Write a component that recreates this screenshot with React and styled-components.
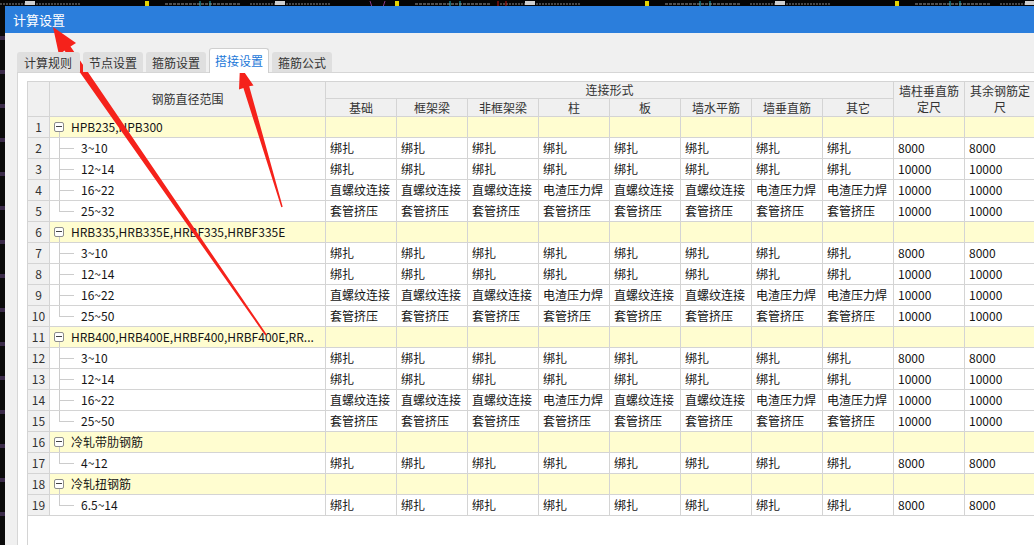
import React from 'react';
import styled, { createGlobalStyle } from 'styled-components';

const GlobalStyle = createGlobalStyle`
  html, body {
    margin: 0;
    padding: 0;
    background: #050505;
    overflow: hidden;
  }
  * {
    box-sizing: border-box;
  }
`;

const tabs = ['计算规则', '节点设置', '箍筋设置', '搭接设置', '箍筋公式'];
const subHeads = ['基础', '框架梁', '非框架梁', '柱', '板', '墙水平筋', '墙垂直筋', '其它'];

const bind = ['绑扎', '绑扎', '绑扎', '绑扎', '绑扎', '绑扎', '绑扎', '绑扎'];
const screw = ['直螺纹连接', '直螺纹连接', '直螺纹连接', '电渣压力焊', '直螺纹连接', '直螺纹连接', '电渣压力焊', '电渣压力焊'];
const sleeve = ['套管挤压', '套管挤压', '套管挤压', '套管挤压', '套管挤压', '套管挤压', '套管挤压', '套管挤压'];

const groups = [
  {
    name: 'HPB235,HPB300',
    items: [
      { range: '3~10', cells: bind, len: ['8000', '8000'] },
      { range: '12~14', cells: bind, len: ['10000', '10000'] },
      { range: '16~22', cells: screw, len: ['10000', '10000'] },
      { range: '25~32', cells: sleeve, len: ['10000', '10000'] },
    ],
  },
  {
    name: 'HRB335,HRB335E,HRBF335,HRBF335E',
    items: [
      { range: '3~10', cells: bind, len: ['8000', '8000'] },
      { range: '12~14', cells: bind, len: ['10000', '10000'] },
      { range: '16~22', cells: screw, len: ['10000', '10000'] },
      { range: '25~50', cells: sleeve, len: ['10000', '10000'] },
    ],
  },
  {
    name: 'HRB400,HRB400E,HRBF400,HRBF400E,RR...',
    items: [
      { range: '3~10', cells: bind, len: ['8000', '8000'] },
      { range: '12~14', cells: bind, len: ['10000', '10000'] },
      { range: '16~22', cells: screw, len: ['10000', '10000'] },
      { range: '25~50', cells: sleeve, len: ['10000', '10000'] },
    ],
  },
  {
    name: '冷轧带肋钢筋',
    items: [{ range: '4~12', cells: bind, len: ['8000', '8000'] }],
  },
  {
    name: '冷轧扭钢筋',
    items: [{ range: '6.5~14', cells: bind, len: ['8000', '8000'] }],
  },
];

function CadStrip() {
  const marks = [0, 250, 500, 750, 1000];
  return (
    <StCadTop>
      <svg width="1034" height="6" viewBox="0 0 1034 6">
        {marks.map((x) => (
          <g key={x}>
            <line x1={x} y1="3" x2={x + 80} y2="3" stroke="#8a8a8a" strokeWidth="1" strokeDasharray="2 1" />
            <rect x={x + 25} y="0" width="10" height="4" fill="#cfcfcf" />
            <rect x={x + 145} y="0" width="4" height="6" fill="#e5d400" />
            <line x1={x + 200} y1="0" x2={x + 200} y2="6" stroke="#1fb8c8" />
            <line x1={x + 210} y1="0" x2={x + 210} y2="6" stroke="#1fb8c8" />
            <line x1={x + 165} y1="3" x2={x + 240} y2="3" stroke="#9a9a9a" strokeDasharray="3 1" />
          </g>
        ))}
        <line x1="370" y1="0" x2="372" y2="6" stroke="#8a3a8a" />
        <line x1="385" y1="0" x2="383" y2="6" stroke="#8a3a8a" />
        <line x1="498" y1="0" x2="498" y2="6" stroke="#c01818" />
        <line x1="506" y1="0" x2="506" y2="6" stroke="#c01818" />
      </svg>
    </StCadTop>
  );
}

function Arrows() {
  return (
    <StOverlay width="1034" height="545" viewBox="0 0 1034 545">
      <polygon
        fill="#f5221b"
        points="53,27 76,43 70.5,46.5 266.7,334.5 265.3,335.5 64.5,50.5 59,55"
      />
      <polygon
        fill="#f5221b"
        points="240,66 253.5,85.5 249.2,86.2 282.7,206.8 281.3,207.2 243.4,88 239,89.5"
      />
    </StOverlay>
  );
}

function App() {
  let rowNo = 0;
  return (
    <>
      <GlobalStyle />
      <StScreen>
        <CadStrip />
        <StMain>
          <StCadLeft />
          <StWindow>
            <StTitleBar>计算设置</StTitleBar>
            <StContent>
              <StTabBar>
                {tabs.map((t, i) => (
                  <StTab key={t} active={i === 3} first={i === 0}>
                    {t}
                  </StTab>
                ))}
              </StTabBar>
              <StPanel>
                <StGrid>
                  <StTable>
                    <colgroup>
                      <col style={{ width: 22 }} />
                      <col style={{ width: 276 }} />
                      {Array.from({ length: 10 }).map((_, i) => (
                        <col key={i} style={{ width: 71 }} />
                      ))}
                    </colgroup>
                    <thead>
                      <StHeadRow1>
                        <StTh rowSpan={2} />
                        <StTh rowSpan={2}>钢筋直径范围</StTh>
                        <StTh colSpan={8}>连接形式</StTh>
                        <StTh rowSpan={2}>
                          墙柱垂直筋
                          <br />
                          定尺
                        </StTh>
                        <StTh rowSpan={2}>
                          其余钢筋定
                          <br />
                          尺
                        </StTh>
                      </StHeadRow1>
                      <StHeadRow2>
                        {subHeads.map((h) => (
                          <StTh key={h}>{h}</StTh>
                        ))}
                      </StHeadRow2>
                    </thead>
                    <tbody>
                      {groups.map((g) => {
                        rowNo += 1;
                        const groupRow = (
                          <StRow key={`g${rowNo}`}>
                            <StNum>{rowNo}</StNum>
                            <StTreeCell group>
                              <StToggle />
                              {g.name}
                            </StTreeCell>
                            {Array.from({ length: 10 }).map((_, i) => (
                              <StCell key={i} group />
                            ))}
                          </StRow>
                        );
                        const childRows = g.items.map((it, idx) => {
                          rowNo += 1;
                          return (
                            <StRow key={`c${rowNo}`}>
                              <StNum>{rowNo}</StNum>
                              <StTreeCell last={idx === g.items.length - 1}>{it.range}</StTreeCell>
                              {it.cells.map((c, i) => (
                                <StCell key={i}>{c}</StCell>
                              ))}
                              {it.len.map((c, i) => (
                                <StCell key={`l${i}`}>{c}</StCell>
                              ))}
                            </StRow>
                          );
                        });
                        return [groupRow, ...childRows];
                      })}
                    </tbody>
                  </StTable>
                </StGrid>
              </StPanel>
            </StContent>
          </StWindow>
        </StMain>
        <Arrows />
      </StScreen>
    </>
  );
}

export default App;

const StScreen = styled.div`
  position: relative;
  width: 1034px;
  height: 545px;
  display: flex;
  flex-direction: column;
  overflow: hidden;
  background: #050505;
  font-family: 'Noto Sans CJK SC', 'Noto Sans', sans-serif;
`;
const StCadTop = styled.div`
  height: 6px;
  flex: none;
  line-height: 0;
  background: #050505;
`;
const StMain = styled.div`
  flex: 1;
  display: flex;
  min-height: 0;
`;
const StCadLeft = styled.div`
  width: 5px;
  flex: none;
  background: repeating-linear-gradient(180deg, #0a0a0a 0px, #0a0a0a 30px, #3a2a48 30px, #3a2a48 34px);
`;
const StWindow = styled.div`
  flex: 1;
  display: flex;
  flex-direction: column;
  background: #f0f0f0;
  min-width: 0;
`;
const StTitleBar = styled.div`
  height: 27px;
  flex: none;
  display: flex;
  align-items: center;
  padding-left: 8px;
  background: #2b7edc;
  color: #ffffff;
  font-size: 13px;
`;
const StContent = styled.div`
  flex: 1;
  display: flex;
  flex-direction: column;
  padding: 15px 0 0 12px;
  min-height: 0;
`;
const StTabBar = styled.div`
  height: 24px;
  flex: none;
  display: flex;
  align-items: flex-end;
  gap: 3px;
  position: relative;
  z-index: 1;
`;
const StTab = styled.div`
  height: 20px;
  display: flex;
  align-items: center;
  padding: 0 ${({ first }) => (first ? '8px 0 7px' : '6px')};
  background: #dfdfdf;
  border-radius: 3px 3px 0 0;
  color: #333333;
  font-size: 12px;
  ${({ active }) =>
    active &&
    `
    height: 25px;
    margin-bottom: -1px;
    padding: 0 5px 1px;
    background: #ffffff;
    border: 1px solid #cfcfcf;
    border-bottom: none;
    color: #1c78d8;
  `}
`;
const StPanel = styled.div`
  flex: 1;
  display: flex;
  min-height: 0;
  padding: 8px 0 0 9px;
  background: #ffffff;
  border-top: 1px solid #d6d6d6;
  border-left: 1px solid #d6d6d6;
`;
const StGrid = styled.div`
  flex: 1;
  min-width: 0;
  border-left: 1px solid #d4d4d4;
  background: #ffffff;
`;
const StTable = styled.table`
  border-collapse: collapse;
  table-layout: fixed;
  width: 1008px;
  margin-left: -1px;
  font-size: 12px;
  color: #141414;
`;
const StHeadRow1 = styled.tr`
  height: 17px;
`;
const StHeadRow2 = styled.tr`
  height: 18px;
`;
const StTh = styled.th`
  padding: 0;
  border: 1px solid #d4d4d4;
  background: #f0f0f0;
  font-weight: normal;
  color: #333333;
  line-height: 16px;
  white-space: nowrap;
  overflow: hidden;
`;
const StRow = styled.tr`
  height: 21px;
`;
const StNum = styled.td`
  padding: 0;
  border: 1px solid #d4d4d4;
  background: #f0f0f0;
  text-align: center;
  color: #333333;
  line-height: 18px;
`;
const StTreeCell = styled.td`
  position: relative;
  padding: 0 0 0 ${({ group }) => (group ? '21px' : '31px')};
  border: 1px solid #d4d4d4;
  background: ${({ group }) => (group ? '#fffdd0' : '#ffffff')};
  line-height: 18px;
  white-space: nowrap;
  overflow: hidden;
  ${({ group, last }) =>
    group
      ? `
    &::after {
      content: '';
      position: absolute;
      left: 9px;
      top: 15px;
      bottom: -1px;
      border-left: 1px solid #cccccc;
    }
  `
      : `
    &::before {
      content: '';
      position: absolute;
      left: 9px;
      top: -1px;
      ${last ? 'height: 11px;' : 'bottom: -1px;'}
      border-left: 1px solid #cccccc;
    }
    &::after {
      content: '';
      position: absolute;
      left: 9px;
      top: 10px;
      width: 15px;
      border-top: 1px solid #cccccc;
    }
  `}
`;
const StToggle = styled.span`
  position: absolute;
  left: 4px;
  top: 5px;
  width: 10px;
  height: 10px;
  border: 1px solid #8c8c8c;
  border-radius: 2px;
  background: #ffffff;
  &::after {
    content: '';
    position: absolute;
    left: 1px;
    right: 1px;
    top: 3px;
    border-top: 1px solid #444444;
  }
`;
const StCell = styled.td`
  padding: 0 0 0 4px;
  border: 1px solid #d4d4d4;
  background: ${({ group }) => (group ? '#fffdd0' : '#ffffff')};
  line-height: 18px;
  white-space: nowrap;
  overflow: hidden;
`;
const StOverlay = styled.svg`
  position: absolute;
  left: 0;
  top: 0;
  pointer-events: none;
`;
